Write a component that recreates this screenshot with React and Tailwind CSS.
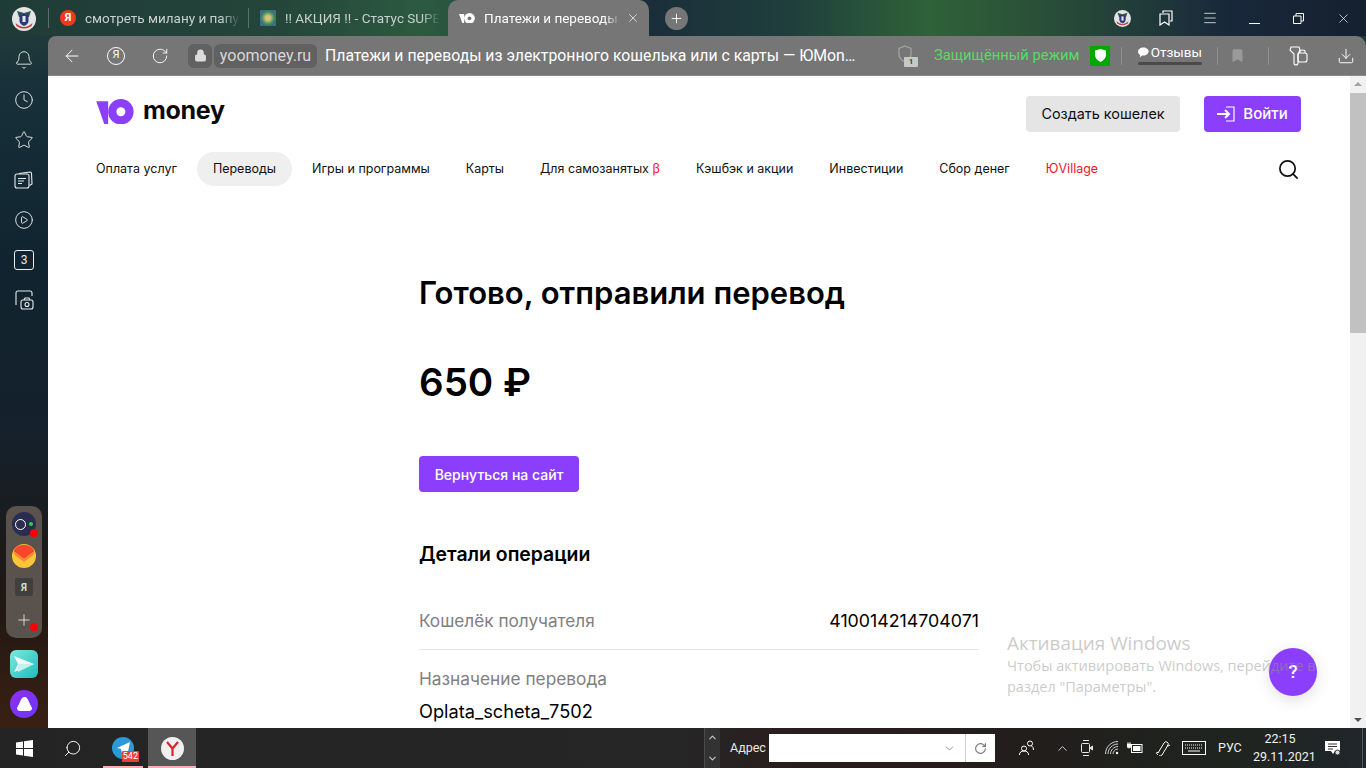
import React from "react";
import { ArrowLeft, RotateCw, Lock, Search, X, Plus, Bell, Clock, Star, CirclePlay, ChevronUp, ChevronDown, Menu, Download, Bookmark } from "lucide-react";

const sans = "font-['Roboto','Noto_Sans',sans-serif]";
const page = "font-['Inter','Roboto',sans-serif]";

function YooLogo({ w = 38, color = "#8b3ffd", hole = "#fff" }) {
  return (
    <svg width={w} height={w * 0.67} viewBox="0 0 38 26" className="block shrink-0">
      <path d="M0 2.500h11.500v23z" fill={color} />
      <path d="M0 2.500h12v23h-4z" fill={color} />
      <circle cx="25" cy="13" r="13" fill={color} />
      <circle cx="25" cy="13" r="4.600" fill={hole} />
    </svg>
  );
}

function Crest({ size }) {
  return (
    <svg width={size} height={size} viewBox="0 0 24 24" className="block shrink-0">
      <circle cx="12" cy="12" r="12" fill="#e4e4e4" />
      <path d="M5 4l7 2 7-2-2 6H7z" fill="#2a5a4a" />
      <path d="M7.500 7h9v7q0 3-4.500 5-4.500-2-4.500-5z" fill="#2b3a78" />
      <path d="M10.500 9h3v6h-3z" fill="#e8e8e8" />
      <path d="M3.500 16q8.500 8 17 0l-1 3q-7.500 5-15 0z" fill="#b83a3a" />
    </svg>
  );
}

function Tab({ icon, text, active }) {
  return (
    <div className={"flex items-center h-[36px] shrink-0 " + (active ? "w-[201px] bg-[#767676] rounded-t-[10px] pl-[11px]" : "w-[199px] pl-[11px]")}>
      {icon}
      <span className={"ml-[9px] text-[13.500px] whitespace-nowrap overflow-hidden [mask-image:linear-gradient(90deg,#000_88%,transparent)] " + (active ? "w-[137px] text-white" : "w-[155px] text-[#c8d0ce]")}>{text}</span>
      {active && <X size={14} strokeWidth={1.2} className="text-white ml-[5px]" />}
    </div>
  );
}

function ToolSep() {
  return <div className="w-px h-[18px] bg-[#909090] shrink-0" />;
}

function SideIcon({ children }) {
  return <div className="h-[40px] flex items-center justify-center text-[#e8ecec]">{children}</div>;
}

function NavItem({ children, active, red }) {
  return (
    <div className={"h-[34px] px-[16px] flex items-center rounded-[17px] text-[12.500px] whitespace-nowrap " + (active ? "bg-[#efefef] " : "") + (red ? "text-[#f5141e]" : "text-[#111]")}>
      {children}
    </div>
  );
}

export default function App() {
  return (
    <div className={"relative w-[1366px] h-[768px] overflow-hidden flex flex-col bg-[linear-gradient(180deg,#24403a_0px,#17303a_90px,#10242f_260px,#15202a_450px,#201812_600px,#3a2014_728px)] " + sans}>
      <div className="absolute inset-x-0 top-0 h-[36px] bg-[linear-gradient(90deg,#1f3b37_0%,#24453a_20%,#2c5a40_31%,#1a2d3a_47%,#1f3f3c_58%,#2f6238_68%,#2a5038_76%,#18283a_90%,#15202f_100%)]" />

      {/* Tab strip */}
      <div className="relative h-[36px] flex items-center shrink-0">
        <div className="w-[48px] flex justify-center shrink-0">
          <div className="relative top-[1px]"><Crest size={24} /></div>
        </div>
        <div className="w-px h-[20px] bg-[#5c6f6c]" />
        <Tab text="смотреть милану и папу – Яндекс" icon={<div className="w-[16px] h-[16px] rounded-full bg-[#f0391c] text-white text-[11px] font-bold flex items-center justify-center shrink-0">Я</div>} />
        <div className="w-px h-[20px] bg-[#5c6f6c]" />
        <Tab text="!! АКЦИЯ !! - Статус SUPER VIP" icon={<div className="w-[16px] h-[16px] rounded-[3px] bg-[radial-gradient(circle,#d8c27a_20%,#3c8a5c_55%,#3a5f9c_80%,#ddd_100%)] shrink-0" />} />
        <Tab active text="Платежи и переводы из электр" icon={<YooLogo w={16} color="#fff" hole="#767676" />} />
        <div className="ml-[16px] w-[23px] h-[23px] rounded-full bg-[#767676] flex items-center justify-center">
          <Plus size={15} strokeWidth={1.4} className="text-white" />
        </div>
        <div className="ml-auto flex items-center text-white">
          <div className="w-[44px] flex justify-center"><Crest size={17} /></div>
          <div className="w-[44px] flex justify-center">
            <svg width="14" height="16" viewBox="0 0 14 16" fill="none" stroke="currentColor" strokeWidth="1.2"><path d="M4 3V1h9v10h-2" /><path d="M1 4h9v11l-4.500-3L1 15z" /></svg>
          </div>
          <div className="w-[44px] flex justify-center"><Menu size={16} strokeWidth={1.1} /></div>
          <div className="w-[44px] flex justify-center"><svg width="11" height="11" viewBox="0 0 11 11" stroke="currentColor"><path d="M0 10.500h11" /></svg></div>
          <div className="w-[44px] flex justify-center"><svg width="11" height="11" viewBox="0 0 11 11" fill="none" stroke="currentColor"><path d="M.5 3h7.500v7.500H.5zM3 3V.5h7.500V8H8" /></svg></div>
          <div className="w-[46px] flex justify-center"><X size={15} strokeWidth={1.1} /></div>
        </div>
      </div>

      <div className="relative flex flex-1 min-h-0">
        {/* Sidebar */}
        <aside className="w-[48px] shrink-0 flex flex-col items-center pt-[4px] pb-[10px]">
          <SideIcon><Bell size={20} strokeWidth={1.1} /></SideIcon>
          <SideIcon><Clock size={20} strokeWidth={1.1} /></SideIcon>
          <SideIcon><Star size={20} strokeWidth={1.1} /></SideIcon>
          <SideIcon>
            <svg width="20" height="20" viewBox="0 0 20 20" fill="none" stroke="currentColor" strokeWidth="1.1"><rect x="1" y="4" width="14" height="14" rx="2" /><path d="M5 3.500l11-1.500c1 0 1.500.5 1.500 1.500L18 14l-2.500 1.500M4 8.500h8M4 11h6M4 13.500h4" /></svg>
          </SideIcon>
          <SideIcon><CirclePlay size={20} strokeWidth={1.1} /></SideIcon>
          <SideIcon>
            <div className="w-[20px] h-[20px] border border-[#e8ecec] rounded-[3px] text-[12px] leading-none flex items-center justify-center">3</div>
          </SideIcon>
          <SideIcon>
            <svg width="20" height="20" viewBox="0 0 20 20" fill="none" stroke="currentColor" strokeWidth="1.1"><path d="M2 15V3q0-2 2-2h12q2 0 2 2v3" /><rect x="7" y="10" width="12" height="9" rx="2" /><circle cx="13" cy="14.500" r="2" /><path d="M10 10l1-2h4l1 2" /></svg>
          </SideIcon>

          <div className="mt-auto w-[36px] h-[132px] rounded-[10px] bg-[#5a524c] flex flex-col items-center pt-[6px] shrink-0">
            <div className="relative w-[24px] h-[24px] rounded-full bg-[#2a2d50] flex items-center pl-[3px] shrink-0">
              <div className="w-[11px] h-[11px] rounded-full border border-white" />
              <div className="ml-[3px] w-[4px] h-[4px] rounded-full bg-[#27d43b]" />
              <div className="absolute -right-[2px] -bottom-[1px] w-[8px] h-[8px] rounded-full bg-[#fa0000]" />
            </div>
            <svg width="24" height="24" viewBox="0 0 24 24" className="mt-[8px] shrink-0">
              <circle cx="12" cy="12" r="12" fill="#fdc53a" />
              <path d="M1.500 7A12 12 0 0 1 22.500 7L12 15z" fill="#f8472a" />
              <path d="M1.500 7L12 15l10.500-8-.8 3.500L12 18 2.300 10.500z" fill="#fb8a30" />
            </svg>
            <div className="mt-[10px] w-[18px] h-[18px] rounded-[2px] bg-[#3f3f3f] text-[#d8d8d8] text-[10px] font-bold flex items-center justify-center shrink-0">Я</div>
            <div className="relative mt-[12px] h-[24px] w-[24px] flex items-center justify-center text-white shrink-0">
              <Plus size={18} strokeWidth={1} />
              <div className="absolute -right-[2px] bottom-[1px] w-[8px] h-[8px] rounded-full bg-[#fa0000]" />
            </div>
          </div>
          <div className="mt-[12px] w-[28px] h-[28px] rounded-[6px] bg-[linear-gradient(135deg,#7fe8e0,#1fbcb8)] flex items-center justify-center shrink-0">
            <svg width="22" height="18" viewBox="0 0 22 18"><path d="M1 1l20 8-20 8 4-8z" fill="#fff" opacity=".9" /><path d="M5 9h16L5 17z" fill="#c7f0ee" /></svg>
          </div>
          <div className="mt-[12px] w-[28px] h-[28px] rounded-full bg-[linear-gradient(135deg,#8f2ff0,#6a36ff)] flex items-center justify-center shrink-0">
            <svg width="15" height="14" viewBox="0 0 15 14"><path d="M7.500 0c2.500 0 3.500 2.500 5 6 1 2.500 2.500 4 2.500 5.500S13.500 14 12 14H3C1.500 14 0 13 0 11.500S1.500 8.500 2.500 6c1.500-3.500 2.500-6 5-6z" fill="#fff" /></svg>
          </div>
        </aside>

        <div className="flex-1 min-w-0 flex flex-col">
          {/* Toolbar */}
          <div className="h-[40px] shrink-0 bg-[#767676] rounded-tl-[8px] rounded-tr-[10px] flex items-center text-white border-b border-[#888]">
            <div className="w-[48px] flex justify-center shrink-0"><ArrowLeft size={20} strokeWidth={1.2} /></div>
            <div className="w-[40px] flex justify-center shrink-0">
              <div className="w-[18px] h-[18px] rounded-full border border-white text-[11px] flex items-center justify-center">Я</div>
            </div>
            <div className="w-[48px] flex justify-center shrink-0"><RotateCw size={18} strokeWidth={1.2} /></div>
            <div className="w-[24px] h-[24px] ml-[4px] rounded-[6px] bg-[#616161] flex items-center justify-center shrink-0">
              <Lock size={13} fill="#dcdcdc" className="text-[#dcdcdc]" />
            </div>
            <div className="ml-[2px] w-[103px] h-[24px] rounded-[6px] bg-[#616161] text-[#d8d8d8] text-[16px] flex items-center justify-center shrink-0">yoomoney.ru</div>
            <div className="ml-[8px] w-[534px] text-[15.800px] whitespace-nowrap overflow-hidden text-ellipsis shrink-0">Платежи и переводы из электронного кошелька или с карты — ЮMoney</div>
            <div className="relative ml-[38px] w-[18px] h-[22px] text-[#a4a4a4] shrink-0">
              <svg width="16" height="18" viewBox="0 0 16 18" fill="none" stroke="currentColor" strokeWidth="1.2"><path d="M8 1l6 2.500V9q0 5-6 8-6-3-6-8V3.500z" /></svg>
              <div className="absolute -right-[3px] bottom-0 w-[14px] h-[10px] rounded-[1px] bg-[#c8c8c8] text-[#444] text-[8px] font-bold leading-none flex items-center justify-center">1</div>
            </div>
            <div className="ml-[19px] w-[146px] text-[14.800px] text-[#55dc66] whitespace-nowrap shrink-0">Защищённый режим</div>
            <div className="ml-[10px] w-[20px] h-[20px] bg-[#00a800] flex items-center justify-center shrink-0">
              <svg width="11" height="13" viewBox="0 0 11 13"><path d="M5.500 0L11 1.500V6q0 4-5.500 7Q0 10 0 6V1.500z" fill="#fff" /></svg>
            </div>
            <div className="ml-[11px] shrink-0"><ToolSep /></div>
            <div className="ml-[16px] w-[64px] h-[24px] flex flex-col shrink-0">
              <div className="flex items-center text-[13.500px] leading-[17px] justify-end gap-[2px]">
                <svg width="12" height="11" viewBox="0 0 12 11"><path d="M6 0c3.300 0 6 1.900 6 4.500S9.300 9 6 9H4.500L2 11l.3-2.800C.9 7.400 0 6 0 4.500 0 1.900 2.700 0 6 0z" fill="#fff" /></svg>
                <span>Отзывы</span>
              </div>
              <div className="mt-[1px] h-[3px] rounded-[2px] bg-[#4a4a4a]" />
            </div>
            <div className="ml-[15px] shrink-0"><ToolSep /></div>
            <div className="w-[50px] flex pl-[12px] shrink-0"><Bookmark size={15} fill="#9a9a9a" className="text-[#9a9a9a]" /></div>
            <ToolSep />
            <div className="w-[57px] flex justify-center shrink-0">
              <svg width="20" height="20" viewBox="0 0 20 20" fill="none" stroke="currentColor" strokeWidth="1.1"><path d="M3 1h8l1 3-2 4v9q0 2-2 2t-2-2V8L2 4z" /><rect x="10" y="7" width="9" height="9" rx="2" /><path d="M12 7V5q0-1 2.500-1T17 5v2" /></svg>
            </div>
            <div className="w-[40px] flex justify-center shrink-0"><Download size={18} strokeWidth={1.3} /></div>
          </div>

          {/* Page */}
          <div className="flex-1 min-h-0 flex bg-white">
            <main className={"flex-1 min-w-0 overflow-hidden px-[48px] " + page}>
              <header className="flex items-center justify-between pt-[20px] h-[56px]">
                <div className="flex items-center gap-[9px] mb-[5px]">
                  <YooLogo w={38} />
                  <span className="text-[25px] font-bold leading-none tracking-[-0.3px] text-[#0a0a0a] relative -top-[1px]">money</span>
                </div>
                <div className="flex items-center gap-[24px] pr-[1px]">
                  <div className="h-[36px] w-[154px] rounded-[4px] bg-[#e5e5e5] text-[#111] text-[14.400px] flex items-center justify-center">Создать кошелек</div>
                  <div className="h-[36px] w-[97px] rounded-[4px] bg-[#8b3ffd] text-white text-[15px] font-medium flex items-center justify-center gap-[8px]">
                    <svg width="18" height="16" viewBox="0 0 18 16" fill="none" stroke="#fff"><path d="M9 1h8v14H9" strokeWidth="1.2" /><path d="M0 8h11M8 4l4 4-4 4" strokeWidth="2" /></svg>
                    Войти
                  </div>
                </div>
              </header>
              <nav className="flex items-center gap-[4px] -ml-[16px] mt-[20px] h-[34px]">
                <NavItem>Оплата услуг</NavItem>
                <NavItem active>Переводы</NavItem>
                <NavItem>Игры и программы</NavItem>
                <NavItem>Карты</NavItem>
                <NavItem>Для самозанятых&nbsp;<span className="text-[#f5141e]">β</span></NavItem>
                <NavItem>Кэшбэк и акции</NavItem>
                <NavItem>Инвестиции</NavItem>
                <NavItem>Сбор денег</NavItem>
                <NavItem red>ЮVillage</NavItem>
                <Search size={23} strokeWidth={1.8} className="ml-auto mr-[2px] text-[#111]" />
              </nav>

              <section className="ml-[323px] w-[560px] mt-[83px]">
                <h1 className="text-[31px] leading-[48px] font-semibold text-black whitespace-nowrap">Готово, отправили перевод</h1>
                <div className="mt-[37px] text-[38.500px] leading-[56px] font-semibold text-black">650 ₽</div>
                <div className="mt-[46px] w-[160px] h-[36px] rounded-[4px] bg-[#8b3ffd] text-white text-[14px] font-medium flex items-center justify-center">Вернуться на сайт</div>
                <h2 className="mt-[49px] text-[19.400px] leading-[26px] font-semibold text-black">Детали операции</h2>
                <div className="mt-[40px] h-[43px] flex items-start justify-between border-b border-[#e6e6e6] text-[17.200px] leading-[28px]">
                  <span className="text-[#808080]">Кошелёк получателя</span>
                  <span className="text-black text-[17.800px]">410014214704071</span>
                </div>
                <div className="mt-[15px] text-[17.300px] leading-[28px] text-[#808080]">Назначение перевода</div>
                <div className="mt-[4px] text-[18.200px] leading-[28px] text-black">Oplata_scheta_7502</div>
              </section>
            </main>

            <div className="w-[16px] shrink-0 bg-[#f1f1f1] flex flex-col items-center justify-between relative">
              <div className="w-0 h-0 mt-[6px] border-x-[4px] border-x-transparent border-b-[4px] border-b-[#a3a3a3]" />
              <div className="absolute left-0 right-0 top-[17px] h-[240px] bg-[#c1c1c1]" />
              <div className="w-0 h-0 mb-[6px] border-x-[4px] border-x-transparent border-t-[4px] border-t-[#505050]" />
            </div>
          </div>
        </div>
      </div>

      {/* Taskbar */}
      <footer className="relative h-[40px] shrink-0 flex items-center text-white bg-[linear-gradient(90deg,#242424_0%,#262626_50%,#2a1d1d_58%,#221e1c_75%,#1f241f_90%,#20262a_100%)]">
        <div className="w-[48px] flex justify-center shrink-0">
          <svg width="17" height="17" viewBox="0 0 17 17" fill="#fff"><path d="M0 2.500l7-1V8H0zM8 1.300L17 0v8H8zM0 9h7v6.500l-7-1zM8 9h9v8l-9-1.300z" /></svg>
        </div>
        <div className="w-[48px] flex justify-center shrink-0"><Search size={19} strokeWidth={1.2} className="-scale-x-100" /></div>
        <div className="relative ml-[7px] w-[40px] h-[40px] flex items-center justify-center shrink-0">
          <div className="w-[22px] h-[22px] rounded-full bg-[#2a9bd8] flex items-center justify-center">
            <svg width="13" height="12" viewBox="0 0 13 12"><path d="M0 6l13-6-2.500 12-3.500-3-2 2-1-4z" fill="#fff" /></svg>
          </div>
          <div className="absolute right-[4px] top-[23px] px-[1px] rounded-[1px] bg-[#ee3c3c] text-[9px] leading-[11px] text-white">542</div>
          <div className="absolute inset-x-0 bottom-0 h-[2px] bg-[#f4aeb4]" />
        </div>
        <div className="relative ml-[5px] w-[48px] h-[40px] bg-[#565656] flex items-center justify-center shrink-0">
          <div className="w-[23px] h-[23px] rounded-full bg-[#f0f0f0] flex items-center justify-center">
            <svg width="13" height="15" viewBox="0 0 13 15" fill="none" stroke="#e0202a" strokeWidth="2.200"><path d="M1 1l5.500 6.500L12 1M6.500 7v8" /></svg>
          </div>
          <div className="absolute inset-x-0 bottom-0 h-[2px] bg-[#f4aeb4]" />
        </div>

        <div className="ml-[508px] w-[16px] h-[40px] bg-[#333] flex flex-col items-center justify-between py-[4px] text-[#c8c8c8] border-l border-[#4a4a4a] shrink-0">
          <ChevronUp size={11} strokeWidth={2.5} />
          <ChevronDown size={11} strokeWidth={2.5} />
        </div>
        <span className="ml-[10px] text-[12.500px] text-[#e8e8e8] w-[33px] shrink-0">Адрес</span>
        <div className="ml-[6px] w-[226px] h-[28px] bg-white flex items-center text-[#777] shrink-0">
          <ChevronDown size={13} strokeWidth={1.4} className="ml-auto mr-[9px]" />
          <div className="w-[30px] h-[28px] border-l border-[#d0d0d0] flex items-center justify-center">
            <RotateCw size={13} strokeWidth={2} />
          </div>
        </div>

        {/* Tray */}
        <svg width="18" height="16" viewBox="0 0 18 16" fill="none" stroke="#fff" className="ml-[23px] shrink-0"><circle cx="6" cy="8.500" r="2.500" /><path d="M1.500 15q0-4 4.500-4t4.500 4" /><circle cx="12" cy="3.500" r="2.500" /><path d="M15.500 10q0-3-2-4" /></svg>
        <ChevronUp size={15} strokeWidth={1.2} className="ml-[19px] shrink-0" />
        <svg width="12" height="16" viewBox="0 0 12 16" fill="none" stroke="#e8e8e8" className="ml-[11px] shrink-0"><path d="M2 .5h6M2 15.500h6" /><rect x=".5" y="3.500" width="8" height="9" rx="1" /><path d="M9 8l2.500-2v4z" fill="#e8e8e8" /></svg>
        <svg width="14" height="14" viewBox="0 0 14 14" fill="none" stroke="#cfcfcf" className="ml-[12px] shrink-0"><path d="M.5 13C.5 6 6 .5 13 .5M3 13c0-5.500 4.500-10 10-10M5.500 13c0-4 3.500-7.500 7.500-7.500M8 13c0-2.500 2-5 5-5" /><circle cx="12" cy="12" r="1.200" fill="#fff" stroke="none" /></svg>
        <svg width="16" height="12" viewBox="0 0 16 12" className="ml-[8px] shrink-0"><rect x="4.500" y="2.500" width="10.500" height="8" fill="none" stroke="#fff" /><rect x="6" y="4" width="7.500" height="5" fill="#fff" /><path d="M0 2h4v2q0 2-2 2t-2-2zM1 0v2M3 0v2" fill="#fff" stroke="#fff" strokeWidth=".7" /></svg>
        <svg width="16" height="16" viewBox="0 0 16 16" fill="none" stroke="#fff" className="ml-[12px] shrink-0"><path d="M3 15q-2-1-1-3l1 1 6-10q1-2 3-1t1 3l-6 10q-1 1-3 1" /><path d="M12 6q2 0 3-1" /></svg>
        <svg width="24" height="14" viewBox="0 0 24 14" fill="none" stroke="#fff" className="ml-[11px] shrink-0"><rect x=".5" y=".5" width="23" height="13" /><path d="M3 4h18M3 7h18" strokeDasharray="1 1" /><path d="M6 10h12" /></svg>
        <span className="ml-[12px] text-[12.500px] text-[#f0f0f0] w-[24px] shrink-0">РУС</span>
        <div className="ml-[11px] w-[54px] shrink-0 text-center text-[12.500px] leading-[18px] text-[#f0f0f0]">
          <div>22:15</div>
          <div className="whitespace-nowrap">29.11.2021</div>
        </div>
        <svg width="16" height="16" viewBox="0 0 16 16" className="ml-[18px] shrink-0" fill="#fff"><path d="M0 1h15v10h-5l-2 3-2-3H0z" /><path d="M3 4h9M3 6.500h9M3 9h5" stroke="#333" /><circle cx="12.500" cy="12.500" r="2.500" fill="#ddd" stroke="#333" /></svg>
        <div className="ml-auto mr-[3px] w-px h-full bg-[#5a5a5a] shrink-0" />
      </footer>

      {/* Floating help + OS watermark */}
      <div className="absolute left-[1269px] top-[648px] w-[48px] h-[48px] rounded-full bg-[#8b3ffd] shadow-[0_4px_16px_rgba(0,0,0,0.12)] text-white text-[19px] font-medium flex items-center justify-center">?</div>
      <div className="absolute left-[1007px] top-[630px] w-[320px] text-[#96969680] font-['Open_Sans',sans-serif] pointer-events-none">
        <div className="text-[18.900px] leading-[26px]">Активация Windows</div>
        <div className="text-[14.500px] leading-[21px] whitespace-nowrap mt-[-1px]">Чтобы активировать Windows, перейдите в</div>
        <div className="text-[14.500px] leading-[21px] whitespace-nowrap">раздел "Параметры".</div>
      </div>
    </div>
  );
}
